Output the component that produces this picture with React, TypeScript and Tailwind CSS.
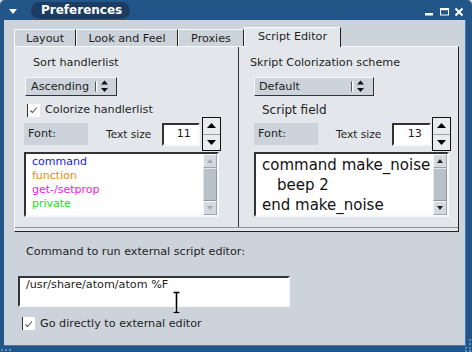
import React from "react";

function DropArrows() {
  return (
    <svg width="14" height="13" viewBox="0 0 14 13">
      <rect x="0" y="1.5" width="1" height="10" fill="#555" />
      <rect x="1" y="1.5" width="1.5" height="10" fill="#fff" />
      <path d="M6 4.5 L9.5 0.5 L13 4.5 Z" fill="#111" />
      <path d="M6 8 L9.5 12 L13 8 Z" fill="#111" />
    </svg>
  );
}

function Dropdown({ label, cls }: { label: string; cls: string }) {
  return (
    <div
      className={
        "h-[19px] bg-[#cdd3da] border border-t-[#f7f9fa] border-l-[#f7f9fa] border-r-[#333] border-b-[#333] flex items-center justify-between " +
        cls
      }
    >
      <span>{label}</span>
      <DropArrows />
    </div>
  );
}

function Check() {
  return (
    <div className="w-[13px] h-[13px] bg-white border-l border-l-[#333] flex items-center justify-center shrink-0">
      <svg width="10" height="10" viewBox="0 0 10 10">
        <path d="M1.5 5.5 L3.5 7.5 L8 2.5" stroke="#555" strokeWidth="1.1" fill="none" />
      </svg>
    </div>
  );
}

function Spinner({ cls }: { cls: string }) {
  return (
    <div className={"w-[19px] h-[34px] border border-[#111] bg-[#e9ecef] flex flex-col " + cls}>
      <div className="flex-1 flex items-center justify-center border-b border-b-[#9aa1a7]">
        <svg width="9" height="5" viewBox="0 0 9 5">
          <path d="M0 5 L4.5 0 L9 5Z" fill="#000" />
        </svg>
      </div>
      <div className="flex-1 flex items-center justify-center">
        <svg width="9" height="5" viewBox="0 0 9 5">
          <path d="M0 0 L4.5 5 L9 0Z" fill="#000" />
        </svg>
      </div>
    </div>
  );
}

function NumInput({ value, cls }: { value: string; cls: string }) {
  return (
    <div
      className={
        "h-[23px] bg-white border-2 border-t-[#333] border-l-[#333] border-r-[#f7f9fa] border-b-[#f7f9fa] flex items-center justify-end pr-[7px] " +
        cls
      }
    >
      {value}
    </div>
  );
}

function ScrollBtn({ up, enabled }: { up: boolean; enabled: boolean }) {
  const c = enabled ? "#222" : "#a4acb3";
  return (
    <div className="h-[14px] bg-[#d3d9de] border border-t-[#f7f9fa] border-l-[#f7f9fa] border-r-[#9da5ac] border-b-[#9da5ac] flex items-center justify-center">
      <svg width="6" height="4" viewBox="0 0 6 4">
        {up ? <path d="M0 4 L3 0 L6 4Z" fill={c} /> : <path d="M0 0 L3 4 L6 0Z" fill={c} />}
      </svg>
    </div>
  );
}

function Scrollbar({ enabled }: { enabled: boolean }) {
  return (
    <div className="w-[14px] h-full flex flex-col shrink-0">
      <ScrollBtn up enabled={enabled} />
      <div className="flex-1 bg-[#b9c1c8] border border-t-[#e3e7ea] border-l-[#e3e7ea] border-r-[#8f979e] border-b-[#8f979e]" />
      <ScrollBtn up={false} enabled={enabled} />
    </div>
  );
}

function Row4({
  value,
  fontMl,
  inputW,
  spinMl,
}: {
  value: string;
  fontMl: string;
  inputW: string;
  spinMl: string;
}) {
  return (
    <div className={"h-[34px] flex items-center " + fontMl}>
      <div className="w-[64px] h-[22px] bg-[#cdd3da] flex items-center pl-[4px]">Font:</div>
      <div className="ml-[18px] w-[47px] whitespace-nowrap text-[10.6px]">Text size</div>
      <NumInput value={value} cls={"ml-[9px] " + inputW} />
      <Spinner cls={spinMl} />
    </div>
  );
}

function Tab({ w, label }: { w: string; label: string }) {
  return (
    <div
      className={
        "h-[17px] bg-[#cdd3da] border-t border-l border-r border-t-[#f7f9fa] border-l-[#f7f9fa] border-r-[#222] flex justify-center pt-[2px] whitespace-nowrap " +
        w
      }
    >
      {label}
    </div>
  );
}

export default function App() {
  return (
    <div className="w-[472px] h-[352px] bg-[#cdd3da] font-['DejaVu_Sans',sans-serif] text-[#1e1e1e] text-[11.2px] leading-[14px]">
      <div className="relative w-[472px] h-[352px] bg-[#225588] rounded-t-[5px] flex flex-col overflow-hidden">
        {/* Title bar */}
        <div className="h-[20px] flex items-start shrink-0">
          <svg className="ml-[9px] mt-[9px]" width="8" height="5" viewBox="0 0 8 5">
            <path d="M0 0H8L4 5Z" fill="#fff" />
          </svg>
          <div className="ml-[14px] mt-[2px] h-[17px] w-[99px] rounded-full bg-[#1c3c61] text-white font-bold text-[12px] leading-[17px] pl-[10px]">
            Preferences
          </div>
          <div className="flex-1" />
          <svg className="mr-[9px]" width="40" height="20" viewBox="0 0 40 20">
            <rect x="2" y="13" width="8" height="2.5" fill="#fff" />
            <rect x="17.5" y="8.5" width="8" height="6.5" stroke="#fff" strokeWidth="1" fill="none" />
            <rect x="17" y="8" width="9" height="2.2" fill="#fff" />
            <path d="M32.5 8.5 L39.5 15.5 M39.5 8.5 L32.5 15.5" stroke="#fff" strokeWidth="2" />
          </svg>
        </div>

        {/* Content */}
        <div className="flex-1 flex flex-col ml-[4px] mr-[6px] mb-[6px] bg-[#cdd3da] border-r border-b border-r-[#3a7cbf] border-b-[#3a7cbf]">
          {/* Tabs */}
          <div className="flex items-end h-[19px] mt-[7px] ml-[10px]">
            <Tab w="w-[62px]" label="Layout" />
            <Tab w="w-[102px]" label="Look and Feel" />
            <Tab w="w-[66px]" label="Proxies" />
            <div className="relative z-10 w-[97px] h-[20px] -mb-[1px] bg-[#e3e7eb] border-t border-l border-r border-t-[#f7f9fa] border-l-[#f7f9fa] border-r-[#222] flex justify-center pt-[2px] whitespace-nowrap">
              Script Editor
            </div>
          </div>

          {/* Panel */}
          <div className="ml-[10px] w-[445px] h-[186px] bg-[#e3e7eb] border border-t-[#f7f9fa] border-l-[#f7f9fa] border-r-[#222] border-b-[#222]">
            <div className="flex h-[181px] border-b border-b-[#8c9298]">
              {/* Left pane */}
              <div className="w-[224px] border-r border-r-[#333] flex flex-col">
                <div className="mt-[9px] ml-[18px] h-[14px] whitespace-nowrap">Sort handlerlist</div>
                <Dropdown label="Ascending" cls="mt-[7px] ml-[10px] w-[92px] pl-[5px] pr-[7px]" />
                <div className="mt-[7px] h-[14px] flex items-center ml-[12px]">
                  <Check />
                  <span className="ml-[5px] whitespace-nowrap">Colorize handlerlist</span>
                </div>
                <Row4 value="11" fontMl="ml-[9px]" inputW="w-[38px]" spinMl="ml-[2px]" />
                <div className="mt-[1px] ml-[9px] w-[195px] h-[65px] bg-white border-2 border-t-[#333] border-l-[#333] border-r-[#f7f9fa] border-b-[#f7f9fa] flex">
                  <div className="flex-1 pl-[6px] pt-[1px] text-[11px] leading-[14px]">
                    <div className="text-[#2020ee]">command</div>
                    <div className="text-[#ee8a00]">function</div>
                    <div className="text-[#f020f0]">get-/setprop</div>
                    <div className="text-[#20dd20]">private</div>
                  </div>
                  <Scrollbar enabled={false} />
                </div>
              </div>

              {/* Right pane */}
              <div className="w-[219px] flex flex-col">
                <div className="mt-[9px] ml-[11px] h-[14px] whitespace-nowrap">Skript Colorization scheme</div>
                <Dropdown label="Default" cls="mt-[7px] ml-[15px] w-[120px] pl-[4px] pr-[8px]" />
                <div className="mt-[7px] h-[14px] ml-[23px] text-[12px] leading-[14px] whitespace-nowrap">Script field</div>
                <Row4 value="13" fontMl="ml-[15px]" inputW="w-[39px]" spinMl="ml-[1px]" />
                <div className="mt-[1px] ml-[15px] w-[195px] h-[65px] bg-white border-2 border-t-[#333] border-l-[#333] border-r-[#f7f9fa] border-b-[#f7f9fa] flex">
                  <div className="flex-1 overflow-hidden pl-[6px] pt-[1px] text-[15px] leading-[20px] whitespace-nowrap text-[#111]">
                    <div>command make_noise</div>
                    <div className="pl-[15px]">beep 2</div>
                    <div>end make_noise</div>
                  </div>
                  <Scrollbar enabled={true} />
                </div>
              </div>
            </div>
          </div>

          {/* Bottom */}
          <div className="mt-[13px] ml-[22px] h-[14px] whitespace-nowrap">Command to run external script editor:</div>
          <div className="relative mt-[17px] ml-[14px] w-[272px] h-[31px] bg-white border-2 border-t-[#333] border-l-[#333] border-r-[#f7f9fa] border-b-[#f7f9fa] pl-[6px] whitespace-nowrap">
            /usr/share/atom/atom %F
            <svg className="absolute left-[152px] top-[13px]" width="9" height="23" viewBox="0 0 9 23">
              <path d="M1 1.5 H8 M4.5 1.5 V21.5 M1 21.5 H8" stroke="#fff" strokeWidth="3.5" fill="none" />
              <path d="M1.5 1.5 H7.5 M4.5 1.5 V21.5 M1.5 21.5 H7.5" stroke="#000" strokeWidth="1.6" fill="none" />
            </svg>
          </div>
          <div className="mt-[10px] ml-[18px] h-[13px] flex items-center">
            <Check />
            <span className="ml-[5px] whitespace-nowrap">Go directly to external editor</span>
          </div>
        </div>

        {/* Resize grips */}
        <svg className="absolute right-0 bottom-0" width="10" height="14" viewBox="0 0 10 14">
          <rect x="7" y="1" width="2" height="2" fill="#5b8fc4" />
          <rect x="7" y="5" width="2" height="2" fill="#5b8fc4" />
          <rect x="7" y="9" width="2" height="2" fill="#5b8fc4" />
          <rect x="3" y="9" width="2" height="2" fill="#5b8fc4" />
          <rect x="3" y="12" width="2" height="2" fill="#5b8fc4" />
          <rect x="7" y="12" width="2" height="2" fill="#5b8fc4" />
        </svg>
        <svg className="absolute left-0 bottom-0" width="12" height="5" viewBox="0 0 12 5">
          <rect x="1" y="2" width="2" height="2" fill="#5b8fc4" />
          <rect x="5" y="2" width="2" height="2" fill="#5b8fc4" />
          <rect x="9" y="2" width="2" height="2" fill="#5b8fc4" />
        </svg>
      </div>
    </div>
  );
}
